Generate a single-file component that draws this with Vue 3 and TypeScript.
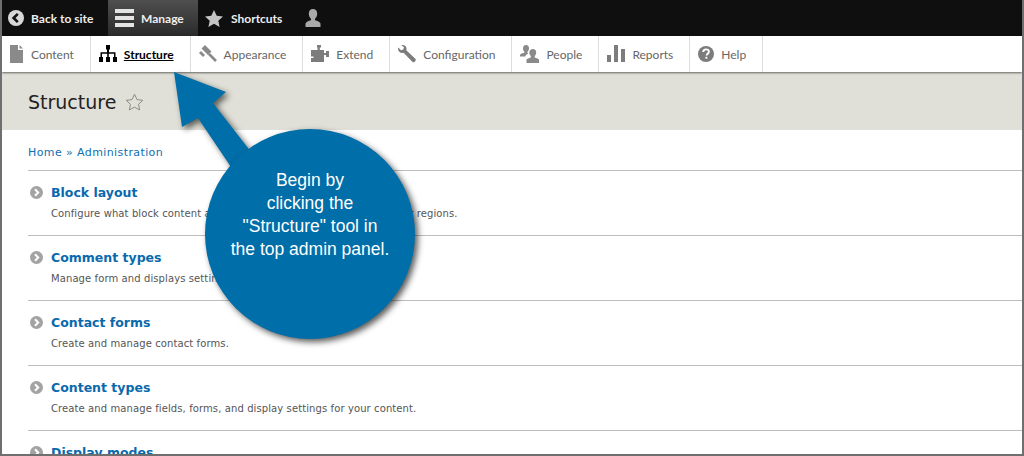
<script setup lang="ts">
interface Tab { label: string; icon: string; active?: boolean }
const tabs: Tab[] = [
  { label: 'Content', icon: 'content' },
  { label: 'Structure', icon: 'structure', active: true },
  { label: 'Appearance', icon: 'appearance' },
  { label: 'Extend', icon: 'extend' },
  { label: 'Configuration', icon: 'config' },
  { label: 'People', icon: 'people' },
  { label: 'Reports', icon: 'reports' },
  { label: 'Help', icon: 'help' }
]
const rows = [
  { title: 'Block layout', desc: "Configure what block content appears in your site's sidebars and other regions." },
  { title: 'Comment types', desc: 'Manage form and displays settings of comments.' },
  { title: 'Contact forms', desc: 'Create and manage contact forms.' },
  { title: 'Content types', desc: 'Create and manage fields, forms, and display settings for your content.' },
  { title: 'Display modes', desc: 'Configure what displays are available.' }
]
</script>

<template>
  <div class="frame">
    <nav class="top">
      <a class="top-item back">
        <svg width="16" height="16" viewBox="0 0 16 16"><circle cx="8" cy="8" r="8" fill="#d8d8d8"/><path d="M9.8 3.8 5.6 8l4.2 4.2" fill="none" stroke="#111" stroke-width="2.6"/></svg>
        <span>Back to site</span>
      </a>
      <a class="top-item manage">
        <svg width="19" height="18" viewBox="0 0 19 18"><path d="M0 0h19v4H0zM0 7h19v4H0zM0 14h19v4H0z" fill="#e4e4e4"/></svg>
        <span>Manage</span>
      </a>
      <a class="top-item shortcuts">
        <svg width="18" height="17" viewBox="0 0 18 17"><path d="M9 0l2.7 5.8 6.3.7-4.7 4.2 1.3 6.3L9 13.8 3.4 17l1.3-6.3L0 6.5l6.3-.7z" fill="#c4c4c4"/></svg>
        <span>Shortcuts</span>
      </a>
      <a class="top-item user">
        <svg width="18" height="18" viewBox="0 0 18 18"><path d="M9 0c2.700 0 4.200 2 4.200 4.800 0 2.200-1 4-2.200 5v1.500c2.500.7 5 1.700 5.500 3.200V18H1.500v-3.500c.5-1.500 3-2.500 5.500-3.200V9.800C5.800 8.800 4.800 7 4.800 4.800 4.800 2 6.300 0 9 0z" fill="#a9a9a9"/></svg>
      </a>
    </nav>

    <nav class="tabs">
      <a v-for="t in tabs" :key="t.label" class="tab" :class="[t.icon, { active: t.active }]">
        <svg v-if="t.icon === 'content'" class="ico" width="14" height="18" viewBox="0 0 14 18"><path d="M0 0h8v5h5v13H0zM9.500 0 13 3.500H9.500z" fill="#8a8a8a"/></svg>
        <svg v-else-if="t.icon === 'structure'" class="ico" width="18" height="18" viewBox="0 0 18 18"><path d="M7 0h4v4.500H10v2.800h6.500V12H18v5h-4v-5h1V8.700H9.800V12H11v5H7v-5h1.200V8.700H3V12h1v5H0v-5h1.500V7.300H8V4.500H7z" fill="#000"/></svg>
        <svg v-else-if="t.icon === 'appearance'" class="ico" width="18" height="18" viewBox="0 0 18 18"><path d="M6 0l6.500 6.500-3.500 3.500L2.500 3.500zM2 6l4 4-2 2-4-4z" fill="#8a8a8a"/><path d="M10 9l7 7" stroke="#8a8a8a" stroke-width="2.600" fill="none"/></svg>
        <svg v-else-if="t.icon === 'extend'" class="ico" width="18" height="18" viewBox="0 0 18 18"><path d="M6 0h4v2.500H8.800V5H13v3h2V6h3v6h-3v-2h-2v7H0v-4h2.500v-1.500H0V5h6.500V2.500H6z" fill="#7c7c7c"/></svg>
        <svg v-else-if="t.icon === 'config'" class="ico" width="18" height="18" viewBox="0 0 18 18"><path d="M4.500 0C6.800 0 8.600 1.600 8.600 3.800c0 .5-.1 1-.3 1.400l9 8.500c.7.700.7 1.700 0 2.400l-.6.600c-.7.700-1.700.7-2.400 0L5.600 7.800c-.4.200-.8.200-1.200.2C2 8 0 6.200 0 3.800c0-.4.100-.8.200-1.200L3 5.200l2.300-.6L6 2.300 3.300.2C3.700.1 4.100 0 4.500 0z" fill="#7c7c7c"/></svg>
        <svg v-else-if="t.icon === 'people'" class="ico" width="19" height="18" viewBox="0 0 19 18"><path d="M6 0c2 0 3 1.300 3 3.200 0 1.500-.6 2.800-1.500 3.500v1.500l1 .4c-1.800.8-3 1.800-3.300 3H0V9.800c.4-.9 2.300-1.500 4.300-2V6.700C3.500 6 3 4.700 3 3.200 3 1.300 4 0 6 0z" fill="#8a8a8a"/><path d="M13 4c2 0 3.200 1.400 3.200 3.400 0 1.500-.6 2.800-1.500 3.500v1.500c1.900.5 3.800 1.200 4.300 2.200V18H6.500v-3.400c.5-1 2.400-1.700 4.300-2.200v-1.500C9.900 10.200 9.300 8.900 9.300 7.400 9.300 5.400 11 4 13 4z" fill="#8a8a8a"/></svg>
        <svg v-else-if="t.icon === 'reports'" class="ico" width="18" height="18" viewBox="0 0 18 18"><path d="M0 10h4v7H0zM7 0h4v17H7zM14 4h4v13h-4z" fill="#7c7c7c"/></svg>
        <svg v-else class="ico" width="16" height="16" viewBox="0 0 16 16"><circle cx="8" cy="8" r="8" fill="#7c7c7c"/><path d="M5.200 6c0-1.700 1.200-2.600 2.900-2.600s2.800 1 2.800 2.400c0 2-2.300 2-2.300 3.700" fill="none" stroke="#fff" stroke-width="1.900"/><path d="M7.400 10.800h1.900v1.900H7.400z" fill="#fff"/></svg>
        <span>{{ t.label }}</span>
      </a>
    </nav>

    <header class="head">
      <h1>Structure</h1>
      <svg width="19" height="18" viewBox="0 0 19 18"><path d="M9.500 1.200l2.500 5.400 5.800.7-4.300 4 1.200 5.700-5.200-2.900-5.200 2.900 1.200-5.700-4.300-4 5.800-.7z" fill="none" stroke="#8d8d80" stroke-width="1"/></svg>
    </header>

    <main class="body">
      <p class="crumbs"><a>Home</a> » <a>Administration</a></p>
      <ul class="list">
        <li v-for="r in rows" :key="r.title" class="row">
          <svg class="chev" width="13" height="13" viewBox="0 0 13 13"><circle cx="6.500" cy="6.500" r="6.500" fill="#a3a3a3"/><path d="M5 3.200 8.200 6.500 5 9.800" fill="none" stroke="#fff" stroke-width="2"/></svg>
          <div>
            <a class="title">{{ r.title }}</a>
            <p class="desc">{{ r.desc }}</p>
          </div>
        </li>
      </ul>
    </main>

    <svg class="arrow" width="100" height="110" viewBox="0 0 100 110">
      <path d="M2 2 54 22 41 33 83 87 63 103 26 48 10 57z" fill="#006ea8"/>
    </svg>
    <div class="bubble">Begin by<br>clicking the<br>"Structure" tool in<br>the top admin panel.</div>
  </div>
</template>

<style>
html, body { margin: 0; padding: 0; background: #fff; }
</style>

<style scoped>
.frame {
  position: relative;
  box-sizing: border-box;
  width: 1024px;
  height: 456px;
  overflow: hidden;
  border: 2px solid #6f6f6f;
  border-top: 0;
  background: #fff;
}
.top {
  display: flex;
  height: 36px;
  background: #0f0f0f;
  font: 700 12px Lato, sans-serif;
  color: #eee;
}
.top-item { display: flex; align-items: center; gap: 7px; }
.back { width: 106px; padding-left: 6px; box-sizing: border-box; }
.manage {
  width: 90px;
  padding-left: 7px;
  box-sizing: border-box;
  background: linear-gradient(#4f4f4f, #2a2a2a);
}
.shortcuts { width: 106px; padding-left: 7px; box-sizing: border-box; gap: 8px; }
.tabs {
  position: relative;
  display: flex;
  height: 36px;
  background: #fff;
  box-shadow: 0 1px 2px rgba(0, 0, 0, .55);
  font: 400 12px Lato, sans-serif;
  color: #666;
}
.tab {
  display: flex;
  align-items: center;
  gap: 7px;
  padding: 0 16px 0 8px;
  border-right: 1px solid #dcdcdc;
}
.ico { flex: none; }
.tab.active { color: #000; font-weight: 700; }
.tab.active span { text-decoration: underline; }
.head {
  display: flex;
  align-items: center;
  gap: 9px;
  height: 58px;
  padding: 1px 0 0 26px;
  box-sizing: border-box;
  background: #e0e0d8;
}
h1 {
  margin: 0;
  font: 400 19px "DejaVu Sans", sans-serif;
  color: #222;
}
.body { padding: 0 0 0 26px; font-family: "DejaVu Sans", sans-serif; }
.crumbs {
  margin: 0;
  height: 40px;
  line-height: 46px;
  font-size: 11px;
  color: #0f6fb0;
  letter-spacing: .4px;
}
.list { list-style: none; margin: 0; padding: 0; border-top: 1px solid #bdbdbd; }
.row {
  display: flex;
  gap: 8px;
  height: 65px;
  box-sizing: border-box;
  padding: 14px 0 0 2px;
  border-bottom: 1px solid #bdbdbd;
}
.chev { flex: none; margin-top: 1px; }
.title { display: block; font-size: 12.5px; font-weight: 700; color: #0a69ad; line-height: 15px; }
.desc { margin: 7px 0 0; font-size: 10px; color: #555; line-height: 13px; letter-spacing: .1px; }
.arrow {
  position: absolute;
  left: 170px;
  top: 70px;
  overflow: visible;
  filter: drop-shadow(3px 3px 3px rgba(0, 0, 0, .6));
}
.bubble {
  position: absolute;
  left: 203px;
  top: 129px;
  width: 210px;
  height: 210px;
  border-radius: 50%;
  background: #006ea8;
  box-shadow: 3px 3px 6px rgba(0, 0, 0, .65);
  box-sizing: border-box;
  padding-top: 40px;
  text-align: center;
  color: #fff;
  font: 400 17.5px/23px "Liberation Sans", sans-serif;
}
</style>
